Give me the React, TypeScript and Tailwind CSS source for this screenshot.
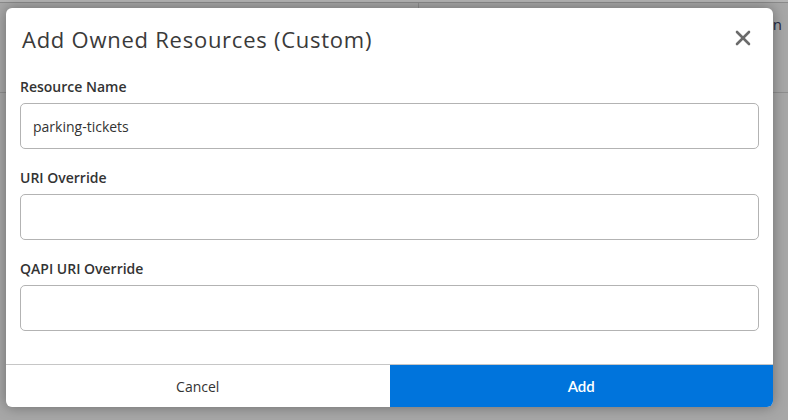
import { X } from "lucide-react";

type Field = {
  label: string;
  value?: string;
};

const fields: Field[] = [
  { label: "Resource Name", value: "parking-tickets" },
  { label: "URI Override" },
  { label: "QAPI URI Override" },
];

function FormField({ label, value }: Field) {
  return (
    <div className="flex flex-col">
      <label className="h-5 text-[14px] font-semibold leading-5 text-[#333]">{label}</label>
      <div className="mt-[6px] flex h-[46px] items-center rounded-[5px] border border-[#b3b3b3] px-3 text-[14px] text-[#333]">
        {value}
      </div>
    </div>
  );
}

export default function App() {
  return (
    <div
      className="relative h-[420px] w-[788px] overflow-hidden bg-[#a7a7a7]"
      style={{ fontFamily: '"Open Sans", "Noto Sans", sans-serif' }}
    >
      {/* dimmed page behind the dialog */}
      <div className="flex h-full flex-col">
        <div className="h-[2px] bg-[#b4b4b4]" />
        <div className="h-[1px] bg-[#8a8a8a]" />
        <div className="flex h-[90px] border-b border-[#8f8f8f]">
          <div className="w-[419px] border-r border-[#8f8f8f]" />
          <div className="flex flex-1 justify-end pr-[6px] pt-[10px] text-[15px] text-[#1f2a44]">n</div>
        </div>
      </div>

      <div className="absolute left-[6px] top-[8px] flex h-[399px] w-[767px] flex-col rounded-[6px] bg-white shadow-[0_0_14px_rgba(0,0,0,0.35)]">
        <div className="flex h-[46px] items-end justify-between pl-[16px] pr-[18px]">
          <h1 className="text-[22px] leading-[30px] tracking-[0.75px] text-[#3a3a3a]">
            Add Owned Resources (Custom)
          </h1>
          <X size={24} strokeWidth={2.6} className="mb-[4px] text-[#6b6b6b]" />
        </div>

        <div className="flex flex-col gap-[19px] px-[14px] pt-[23px]">
          {fields.map((field) => (
            <FormField key={field.label} {...field} />
          ))}
        </div>

        <div className="mt-auto flex h-[43px] border-t border-[#c6c6c6]">
          <button className="flex-1 text-[14px] text-[#333]" type="button">
            Cancel
          </button>
          <button
            className="flex-1 rounded-br-[6px] bg-[#0074dc] text-[15px] font-semibold text-white"
            style={{ fontFamily: '"Lato", "Open Sans", sans-serif' }}
            type="button"
          >
            Add
          </button>
        </div>
      </div>
    </div>
  );
}
